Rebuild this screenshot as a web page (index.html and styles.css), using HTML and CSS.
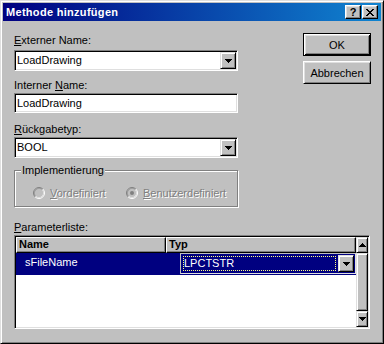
FILE: index.html
```html
<!DOCTYPE html>
<html>
<head>
  <meta charset="UTF-8">
  <title>Methode hinzufügen</title>
  <link rel="stylesheet" href="styles.css">
</head>
<body>
  <div class="dialog">
    <div class="titlebar">
      <span class="title-text">Methode hinzufügen</span>
      <div class="title-buttons">
        <span class="title-btn">?</span>
        <span class="title-btn">
          <svg width="8" height="7" viewBox="0 0 8 7" shape-rendering="crispEdges"><path d="M0 0h2v1H0zM6 0h2v1H6zM1 1h2v1H1zM5 1h2v1H5zM2 2h4v1H2zM3 3h2v1H3zM2 4h4v1H2zM1 5h2v1H1zM5 5h2v1H5zM0 6h2v1H0zM6 6h2v1H6z"/></svg>
        </span>
      </div>
    </div>

    <div class="dialog-body">
      <div class="top-row">
        <div class="form-col">
          <div class="label label-ext"><u>E</u>xterner Name:</div>
          <div class="field combo combo-ext">
            <span class="combo-text">LoadDrawing</span>
            <span class="drop-btn">
              <svg width="7" height="4" viewBox="0 0 7 4" shape-rendering="crispEdges"><path d="M0 0h7v1H0zM1 1h5v1H1zM2 2h3v1H2zM3 3h1v1H3z"/></svg>
            </span>
          </div>

          <div class="label label-int">Interner <u>N</u>ame:</div>
          <div class="field edit">LoadDrawing</div>

          <div class="label label-ret"><u>R</u>ückgabetyp:</div>
          <div class="field combo">
            <span class="combo-text">BOOL</span>
            <span class="drop-btn">
              <svg width="7" height="4" viewBox="0 0 7 4" shape-rendering="crispEdges"><path d="M0 0h7v1H0zM1 1h5v1H1zM2 2h3v1H2zM3 3h1v1H3z"/></svg>
            </span>
          </div>

          <fieldset class="group">
            <legend>Implementierung</legend>
            <div class="radio-row">
              <div class="radio-item radio-first">
                <svg class="radio" width="12" height="12" viewBox="0 0 12 12">
                  <circle cx="6" cy="6" r="4.5" fill="#c0c0c0"/>
                  <path d="M2.11 9.89A5.5 5.5 0 0 1 9.89 2.11" fill="none" stroke="#808080"/>
                  <path d="M9.89 2.11A5.5 5.5 0 0 1 2.11 9.89" fill="none" stroke="#fff"/>
                  <path d="M2.82 9.18A4.5 4.5 0 0 1 9.18 2.82" fill="none" stroke="#000" stroke-opacity="0.15"/>
                  <path d="M9.18 2.82A4.5 4.5 0 0 1 2.82 9.18" fill="none" stroke="#dfdfdf"/>
                </svg>
                <span class="disabled-text"><u>V</u>ordefiniert</span>
              </div>
              <div class="radio-item">
                <svg class="radio" width="12" height="12" viewBox="0 0 12 12">
                  <circle cx="6" cy="6" r="4.5" fill="#c0c0c0"/>
                  <path d="M2.11 9.89A5.5 5.5 0 0 1 9.89 2.11" fill="none" stroke="#808080"/>
                  <path d="M9.89 2.11A5.5 5.5 0 0 1 2.11 9.89" fill="none" stroke="#fff"/>
                  <path d="M2.82 9.18A4.5 4.5 0 0 1 9.18 2.82" fill="none" stroke="#000" stroke-opacity="0.15"/>
                  <path d="M9.18 2.82A4.5 4.5 0 0 1 2.82 9.18" fill="none" stroke="#dfdfdf"/>
                  <circle cx="6" cy="6" r="2" fill="#808080"/>
                </svg>
                <span class="disabled-text"><u>B</u>enutzerdefiniert</span>
              </div>
            </div>
          </fieldset>
        </div>

        <div class="button-col">
          <button class="dlg-btn dlg-default">OK</button>
          <button class="dlg-btn">Abbrechen</button>
        </div>
      </div>

      <div class="label label-list"><u>P</u>arameterliste:</div>
      <div class="list">
        <div class="list-main">
          <div class="list-header">
            <div class="header-cell col-name">Name</div>
            <div class="header-cell col-type">Typ</div>
          </div>
          <div class="list-row selected">
            <div class="cell col-name">sFileName</div>
            <div class="cell col-type">
              <div class="cell-combo">
                <span class="cell-combo-text"><span class="focus-box">LPCTSTR</span></span>
                <span class="drop-btn">
                  <svg width="7" height="4" viewBox="0 0 7 4" shape-rendering="crispEdges"><path d="M0 0h7v1H0zM1 1h5v1H1zM2 2h3v1H2zM3 3h1v1H3z"/></svg>
                </span>
              </div>
            </div>
          </div>
        </div>
        <div class="scrollbar">
          <div class="sb-btn">
            <svg width="7" height="4" viewBox="0 0 7 4" shape-rendering="crispEdges"><path d="M3 0h1v1H3zM2 1h3v1H2zM1 2h5v1H1zM0 3h7v1H0z"/></svg>
          </div>
          <div class="sb-thumb"></div>
          <div class="sb-btn">
            <svg width="7" height="4" viewBox="0 0 7 4" shape-rendering="crispEdges"><path d="M0 0h7v1H0zM1 1h5v1H1zM2 2h3v1H2zM3 3h1v1H3z"/></svg>
          </div>
        </div>
      </div>
    </div>
  </div>
</body>
</html>
```

FILE: styles.css
```css
body {
  margin: 0;
  background: #c0c0c0;
  font-family: "Liberation Sans", Arial, sans-serif;
  font-size: 11px;
  color: #000;
}
.dialog {
  width: 384px;
  height: 344px;
  box-sizing: border-box;
  background: #c0c0c0;
  border: 1px solid;
  border-color: #dfdfdf #000 #000 #dfdfdf;
  box-shadow: inset 1px 1px #fff, inset -1px -1px #808080;
  padding: 2px;
}
.titlebar {
  height: 18px;
  display: flex;
  align-items: center;
  padding-left: 3px;
  background: linear-gradient(to right, #000080, #1084d0);
  color: #fff;
}
.title-text {
  flex: 1;
  font-weight: bold;
  line-height: 18px;
  letter-spacing: 0.3px;
}
.title-buttons {
  display: flex;
  gap: 1px;
  margin-right: 3px;
}
.title-btn {
  width: 16px;
  height: 14px;
  box-sizing: border-box;
  display: flex;
  align-items: center;
  justify-content: center;
  background: #c0c0c0;
  color: #000;
  font-weight: bold;
  line-height: 12px;
  border: 1px solid;
  border-color: #fff #000 #000 #fff;
  box-shadow: inset -1px -1px #808080, inset 1px 1px #dfdfdf;
}

/* sunken / raised 3d borders */
.field {
  box-sizing: border-box;
  background: #fff;
  border: 1px solid;
  border-color: #808080 #fff #fff #808080;
  box-shadow: inset 1px 1px #000, inset -1px -1px #dfdfdf;
  padding: 1px;
}
.drop-btn, .sb-btn, .sb-thumb {
  box-sizing: border-box;
  background: #c0c0c0;
  border: 1px solid;
  border-color: #dfdfdf #000 #000 #dfdfdf;
  box-shadow: inset 1px 1px #fff, inset -1px -1px #808080;
}

.dialog-body {
  padding: 0 10px 0 11px;
}
.top-row {
  display: flex;
  justify-content: space-between;
}
.form-col {
  width: 224px;
}
.label {
  height: 13px;
  line-height: 13px;
  white-space: nowrap;
}
.label-ext { margin-top: 13px; }
.label-int { margin-top: 8px; }
.label-ret { margin-top: 10px; }
.label-list { margin-top: 14px; }

.combo {
  height: 21px;
  margin-top: 3px;
  display: flex;
}
.label-int + .edit, .label-ret + .combo {
  margin-top: 1px;
}
.combo-text {
  flex: 1;
  padding-left: 1px;
  line-height: 17px;
}
.drop-btn {
  width: 16px;
  height: 17px;
  display: flex;
  align-items: center;
  justify-content: center;
}
.edit {
  height: 20px;
  padding-left: 2px;
  line-height: 16px;
}

.group {
  margin: 6px 0 0;
  padding: 0 0 7px 6px;
  width: 224px;
  box-sizing: border-box;
  border: 1px solid #808080;
  box-shadow: 1px 1px #fff, inset 1px 1px #fff;
}
.group legend {
  padding: 0 1px;
  line-height: 13px;
  background: #c0c0c0;
}
.radio-row {
  display: flex;
  align-items: center;
  margin: 9px 0 0 12px;
  height: 13px;
}
.radio-item {
  display: flex;
  align-items: center;
  gap: 5px;
}
.radio-first {
  width: 93px;
}
.disabled-text {
  color: #808080;
  text-shadow: 1px 1px #fff;
}

.button-col {
  display: flex;
  flex-direction: column;
  gap: 5px;
  margin-top: 12px;
}
.dlg-btn {
  width: 68px;
  height: 23px;
  padding: 0;
  font: inherit;
  color: #000;
  background: #c0c0c0;
  border: 1px solid;
  border-color: #fff #000 #000 #fff;
  box-shadow: inset 1px 1px #dfdfdf, inset -1px -1px #808080;
}
.dlg-default {
  border-color: #000;
  box-shadow: inset 1px 1px #fff, inset -1px -1px #000, inset 2px 2px #dfdfdf, inset -2px -2px #808080;
}

.list {
  width: 356px;
  height: 94px;
  margin-top: 1px;
  display: flex;
  box-sizing: border-box;
  background: #fff;
  border: 1px solid;
  border-color: #808080 #fff #fff #808080;
  box-shadow: inset 1px 1px #000, inset -1px -1px #dfdfdf;
  padding: 1px;
}
.list-main {
  flex: 1;
}
.list-header {
  display: flex;
  height: 16px;
}
.header-cell {
  box-sizing: border-box;
  height: 16px;
  padding-left: 2px;
  background: #c0c0c0;
  font-weight: bold;
  line-height: 13px;
  border: 1px solid;
  border-color: #fff #000 #000 #fff;
  box-shadow: inset -1px -1px #808080;
}
.col-name {
  width: 150px;
}
.col-type {
  flex: 1;
}
.list-row {
  display: flex;
  height: 22px;
}
.selected {
  background: #000080;
  color: #fff;
}
.cell.col-name {
  padding: 3px 0 0 9px;
  line-height: 13px;
}
.cell.col-type {
  padding-left: 5px;
}
.cell-combo {
  width: 176px;
  height: 21px;
  box-sizing: border-box;
  display: flex;
  padding: 1px;
  border: 1px solid;
  border-color: #c0c0c0 #dfdfdf #dfdfdf #c0c0c0;
  background: #000080;
}
.cell-combo-text {
  flex: 1;
  padding: 1px 2px 1px 1px;
  display: flex;
}
.focus-box {
  flex: 1;
  outline: 1px dotted #ffff80;
  outline-offset: -1px;
  line-height: 15px;
  padding-left: 1px;
}
.scrollbar {
  width: 16px;
  display: flex;
  flex-direction: column;
}
.sb-btn {
  height: 16px;
  display: flex;
  align-items: center;
  justify-content: center;
}
.sb-thumb {
  flex: 1;
}
```
